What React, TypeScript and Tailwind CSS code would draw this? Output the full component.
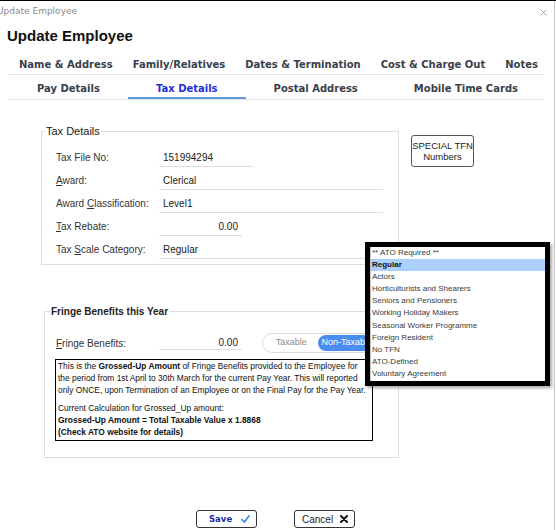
import React from "react";

const tabsTop = ["Name & Address", "Family/Relatives", "Dates & Termination", "Cost & Charge Out", "Notes"];
const tabsBottom = ["Pay Details", "Tax Details", "Postal Address", "Mobile Time Cards"];

const scaleOptions = [
  "** ATO Required **",
  "Regular",
  "Actors",
  "Horticulturists and Shearers",
  "Seniors and Pensioners",
  "Working Holiday Makers",
  "Seasonal Worker Programme",
  "Foreign Resident",
  "No TFN",
  "ATO-Defined",
  "Voluntary Agreement",
];

type FieldProps = {
  label: React.ReactNode;
  value: string;
  width: string;
  right?: boolean;
};

const Field = ({ label, value, width, right }: FieldProps) => (
  <div className="flex h-[23px] items-center">
    <div className="w-[103px] text-[10px] text-[#333]">{label}</div>
    <div
      className={`flex h-[18px] items-center border-b border-[#dedede] text-[10px] text-[#222] ${width} ${
        right ? "justify-end pr-[4px]" : "pl-[4px]"
      }`}
    >
      {value}
    </div>
  </div>
);

const App = () => {
  return (
    <div className="relative h-[530px] w-[556px] overflow-hidden border-t border-black bg-white font-['Liberation_Sans',Arial,sans-serif] text-[#222]">
      <div className="h-full w-[555px] border-r border-[#c8c8c8]">
        {/* window title */}
        <div className="flex h-[21px] items-center justify-between pr-[7px]">
          <span className="-ml-[3px] font-['DejaVu_Sans',sans-serif] text-[9px] text-[#8a8a8a]">Update Employee</span>
          <svg width="7" height="7" viewBox="0 0 7 7" className="mt-[2px]">
            <path d="M0.5 0.5 L6.5 6.5 M6.5 0.5 L0.5 6.5" stroke="#9a9a9a" strokeWidth="0.8" />
          </svg>
        </div>

        <div className="flex h-[28px] items-center pl-[7px] text-[15px] font-bold text-[#111]">Update Employee</div>

        {/* tabs */}
        <div className="ml-[8px] w-[536px] font-['DejaVu_Sans',sans-serif] text-[10px] font-bold text-[#37404c]">
          <div className="flex h-[25px] items-center border-b border-[#e6e6e6] pl-[1px] pt-[4px]">
            {tabsTop.map((t) => (
              <div key={t} className="whitespace-nowrap px-[10px]">
                {t}
              </div>
            ))}
          </div>
          <div className="flex h-[25px] border-b border-[#e2e2e2]">
            {tabsBottom.map((t) => (
              <div
                key={t}
                className={`flex h-full items-center whitespace-nowrap border-b-2 pt-[5px] ${
                  t === "Pay Details" ? "pl-[29px] pr-[28px]" : "px-[28px]"
                } ${t === "Tax Details" ? "border-[#5b9be0] text-[#1f2fd8]" : "border-transparent"}`}
              >
                {t}
              </div>
            ))}
          </div>
        </div>

        {/* body */}
        <div className="pl-[41px] pt-[25px]">
          <div className="flex items-start gap-[12px]">
            <fieldset className="w-[358px] border border-[#dcdcdc]">
              <legend className="ml-[3px] px-[1px] text-[11px] leading-[13px] text-[#222]">Tax Details</legend>
              <div className="pb-[3px] pl-[14px] pt-[8px]">
                <Field label="Tax File No:" value="151994294" width="w-[94px]" />
                <Field label={<><u>A</u>ward:</>} value="Clerical" width="w-[224px]" />
                <Field label={<>Award <u>C</u>lassification:</>} value="Level1" width="w-[224px]" />
                <Field label={<><u>T</u>ax Rebate:</>} value="0.00" width="w-[83px]" right />
                <Field label={<>Tax <u>S</u>cale Category:</>} value="Regular" width="w-[224px]" />
              </div>
            </fieldset>
            <button className="mt-[10px] flex h-[32px] w-[63px] flex-col items-center justify-center rounded-[3px] border border-[#555] bg-white text-[9.5px] leading-[11px] text-[#222]">
              <span>SPECIAL TFN</span>
              <span>Numbers</span>
            </button>
          </div>

          <fieldset className="ml-[3px] mt-[40px] w-[355px] border border-[#dcdcdc]">
            <legend className="ml-[5px] px-[1px] text-[10px] font-bold leading-[13px] text-[#222]">
              Fringe Benefits this Year
            </legend>
            <div className="pb-[16px] pl-[11px] pt-[14px]">
              <div className="flex h-[22px] items-center">
                <div className="w-[103px] text-[10px] text-[#333]">
                  <u>F</u>ringe Benefits:
                </div>
                <div className="flex h-[13px] w-[83px] items-center justify-end border-b border-[#dedede] pr-[4px] text-[10px]">
                  0.00
                </div>
                <div className="ml-[20px] flex h-[20px] w-[112px] items-center rounded-full border border-[#dcdcdc] p-[1px] text-[9px]">
                  <div className="w-[56px] text-center text-[#8a8a8a]">Taxable</div>
                  <div className="flex h-full flex-1 items-center whitespace-nowrap rounded-full bg-[#4a8cf0] pl-[3px] text-white">
                    Non-Taxable
                  </div>
                </div>
              </div>
              <div className="-ml-[1px] mt-[5px] h-[82px] w-[318px] whitespace-nowrap border border-black pl-[2px] pt-[1px] text-[8.4px] leading-[11.8px] text-[#111]">
                <p>
                  This is the <b>Grossed-Up Amount</b> of Fringe Benefits provided to the Employee for
                  <br />
                  the period from 1st April to 30th March for the current Pay Year. This will reported
                  <br />
                  only ONCE, upon Termination of an Employee or on the Final Pay for the Pay Year.
                </p>
                <p className="mt-[7px]">Current Calculation for Grossed_Up amount:</p>
                <p className="font-bold">Grossed-Up Amount = Total Taxable Value x 1.8868</p>
                <p className="font-bold">(Check ATO website for details)</p>
              </div>
            </div>
          </fieldset>
        </div>

        {/* buttons */}
        <div className="mt-[52px] flex gap-[37px] pl-[196px]">
          <button className="flex h-[18px] w-[61px] items-center justify-between rounded-[3px] border border-[#333] bg-white pl-[12px] pr-[6px] font-['DejaVu_Sans',sans-serif] text-[8.5px] font-bold text-[#1a2aa8]">
            Save
            <svg width="9" height="8" viewBox="0 0 9 8">
              <path d="M1 4.5 L3.4 7 L8 1" fill="none" stroke="#3a8ee6" strokeWidth="1.8" strokeLinecap="round" strokeLinejoin="round" />
            </svg>
          </button>
          <button className="flex h-[18px] w-[61px] items-center justify-between rounded-[3px] border border-[#333] bg-white pl-[7px] pr-[6px] text-[10px] text-[#222]">
            Cancel
            <svg width="8" height="8" viewBox="0 0 8 8">
              <path d="M1 1 L7 7 M7 1 L1 7" stroke="#111" strokeWidth="2" strokeLinecap="round" />
            </svg>
          </button>
        </div>
      </div>

      {/* open tax scale dropdown */}
      <div className="absolute left-[365px] top-[241px] h-[144px] w-[185px] border-[5px] border-black bg-white shadow-[2px_2px_3px_rgba(0,0,0,0.35)]">
        <ul className="h-full border-l border-[#c4c4c4] text-[8px] text-[#3a3a3a]">
          {scaleOptions.map((o) => (
            <li
              key={o}
              className={`h-[12.1px] whitespace-nowrap pl-[1px] leading-[12.1px] ${
                o === "Regular" ? "bg-[#aad0fb] font-bold text-[#111]" : ""
              }`}
            >
              {o}
            </li>
          ))}
        </ul>
      </div>
    </div>
  );
};

export default App;
